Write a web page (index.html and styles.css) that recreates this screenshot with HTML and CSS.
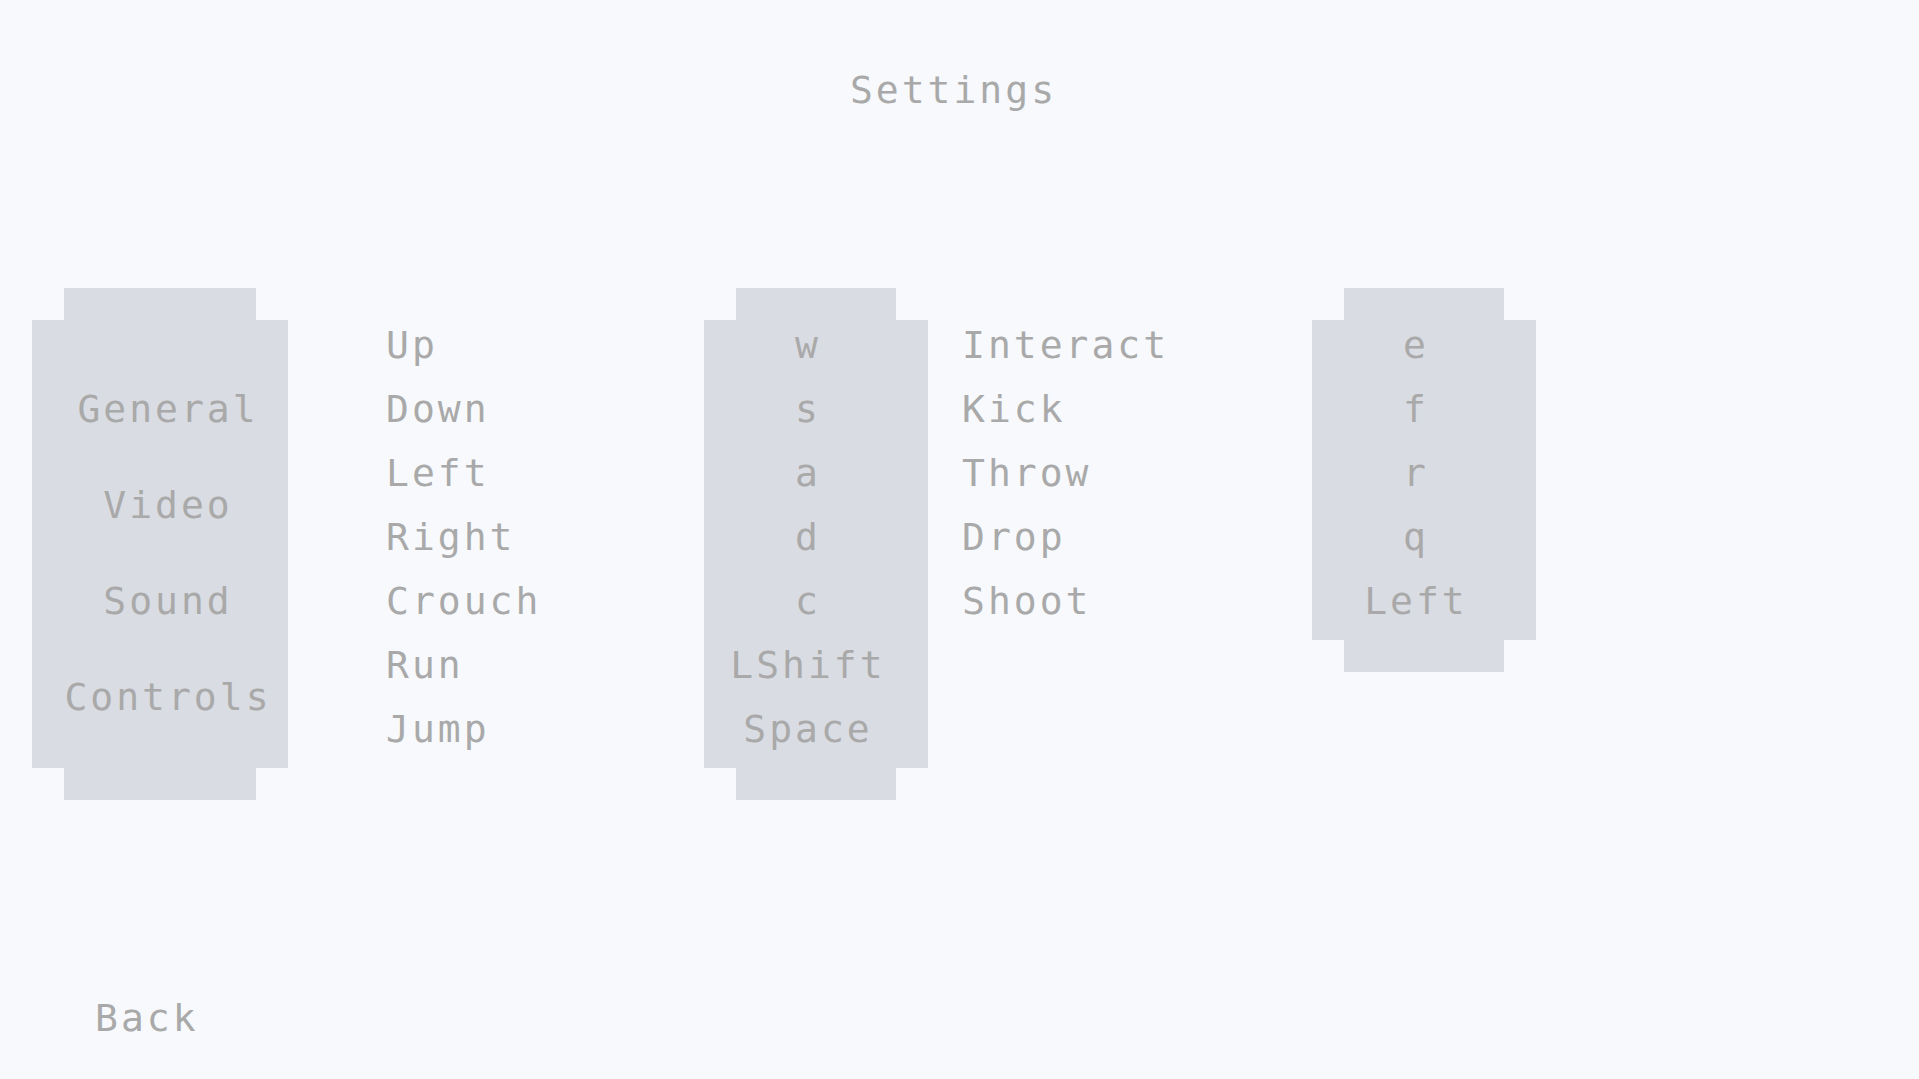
FILE: index.html
```html
<!DOCTYPE html>
<html lang="en">
<head>
<meta charset="utf-8">
<title>Settings</title>
<link rel="stylesheet" href="styles.css">
</head>
<body>
<div class="screen">
  <header class="title">Settings</header>
  <main class="settings">
    <nav class="panel nav">
      <div class="nav-item">General</div>
      <div class="nav-item">Video</div>
      <div class="nav-item">Sound</div>
      <div class="nav-item">Controls</div>
    </nav>
    <ul class="labels labels-a">
      <li>Up</li>
      <li>Down</li>
      <li>Left</li>
      <li>Right</li>
      <li>Crouch</li>
      <li>Run</li>
      <li>Jump</li>
    </ul>
    <ul class="panel keys">
      <li>w</li>
      <li>s</li>
      <li>a</li>
      <li>d</li>
      <li>c</li>
      <li>LShift</li>
      <li>Space</li>
    </ul>
    <ul class="labels labels-b">
      <li>Interact</li>
      <li>Kick</li>
      <li>Throw</li>
      <li>Drop</li>
      <li>Shoot</li>
    </ul>
    <ul class="panel keys">
      <li>e</li>
      <li>f</li>
      <li>r</li>
      <li>q</li>
      <li>Left</li>
    </ul>
  </main>
  <footer class="footer"><span class="back">Back</span></footer>
</div>
</body>
</html>
```

FILE: styles.css
```css
html, body {
  margin: 0;
  padding: 0;
  background: #f7f9fd;
}

body {
  font-family: "DejaVu Sans Mono", "Liberation Mono", monospace;
  font-size: 38px;
  letter-spacing: 3px;
  color: #a9a9a9;
}

.screen {
  height: 1079px;
  display: flex;
  flex-direction: column;
  overflow: hidden;
}

.title {
  padding-top: 58px;
  line-height: 64px;
  text-align: center;
  padding-right: 12px;
}

.settings {
  margin-top: 166px;
  padding-left: 32px;
  display: grid;
  grid-template-columns: 256px 416px 224px 384px 224px;
  align-items: start;
}

ul {
  list-style: none;
  margin: 0;
}

.panel {
  background: #d9dce2;
  text-align: center;
  clip-path: polygon(32px 0, calc(100% - 32px) 0, calc(100% - 32px) 32px, 100% 32px,
    100% calc(100% - 32px), calc(100% - 32px) calc(100% - 32px), calc(100% - 32px) 100%,
    32px 100%, 32px calc(100% - 32px), 0 calc(100% - 32px), 0 32px, 32px 32px);
}

.nav {
  padding: 73px 0 55px 16px;
  line-height: 96px;
}

.keys {
  padding: 25px 16px 39px 0;
  line-height: 64px;
}

.labels {
  padding-top: 25px;
  padding-bottom: 0;
  line-height: 64px;
}

.labels-a {
  padding-left: 98px;
}

.labels-b {
  padding-left: 34px;
}

.footer {
  margin-top: auto;
  padding: 0 0 29px 95px;
  line-height: 64px;
}
```
